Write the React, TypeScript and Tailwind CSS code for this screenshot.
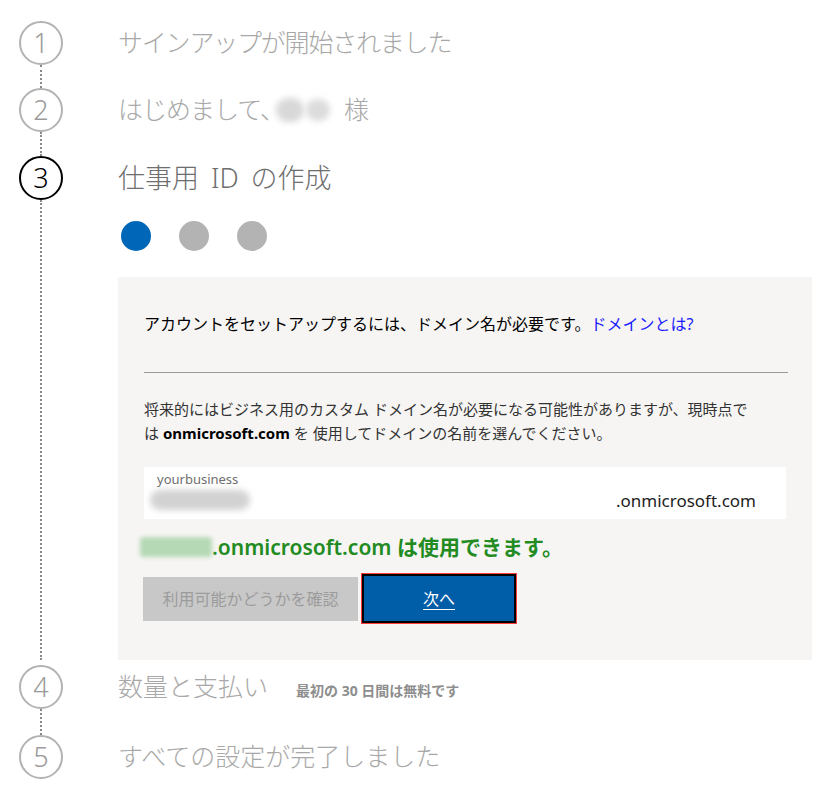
import React from "react"

const font = { fontFamily: '"Noto Sans", "Noto Sans CJK JP", sans-serif' }

function Circle({ n, active }: { n: number; active?: boolean }) {
  return (
    <div
      className={`flex h-[44px] w-[44px] shrink-0 items-center justify-center rounded-full border-2 bg-white text-[27px] font-light leading-none ${
        active ? "border-black text-black" : "border-[#b3b3b3] text-[#9a9a9a]"
      }`}
    >
      <span className="-mt-[2px]">{n}</span>
    </div>
  )
}

function Step({
  n,
  active,
  last,
  children,
  rowClass,
}: {
  n: number
  active?: boolean
  last?: boolean
  children: React.ReactNode
  rowClass?: string
}) {
  return (
    <div className={`flex ${rowClass ?? ""}`}>
      <div className="flex w-[82px] shrink-0 flex-col items-center">
        <Circle n={n} active={active} />
        {!last && <div className="w-0 flex-1 border-l-2 border-dotted border-[#8a8a8a]"></div>}
      </div>
      <div className="ml-[36px] flex-1">{children}</div>
    </div>
  )
}

export default function App() {
  return (
    <div className="min-h-[800px] w-[830px] bg-white pt-[21px]" style={font}>
      {/* Step 1 */}
      <Step n={1} rowClass="h-[67px]">
        <div className="flex h-[44px] items-center text-[25px] font-light tracking-[-1.2px] text-[#a8a8a8]">
          サインアップが開始されました
        </div>
      </Step>

      {/* Step 2 */}
      <Step n={2} rowClass="h-[68px]">
        <div className="flex h-[44px] items-center text-[25px] font-light text-[#a8a8a8]">
          <span className="tracking-[-1px]">はじめまして、</span>
          <span className="-ml-[8px] flex items-center gap-[2px]">
            <span className="h-[24px] w-[28px] rounded-full bg-[#d8d8d8] blur-[3px]"></span>
            <span className="h-[22px] w-[24px] rounded-full bg-[#dcdcdc] blur-[3px]"></span>
          </span>
          <span className="ml-[14px]">様</span>
        </div>
      </Step>

      {/* Step 3 */}
      <Step n={3} active rowClass="pb-[5px]">
        <div className="flex h-[44px] items-center gap-[12px] text-[27px] font-light text-[#6e6e6e]">
          <span>仕事用</span>
          <span>ID</span>
          <span>の作成</span>
        </div>

        <div className="ml-[3px] mt-[21px] flex gap-[28px]">
          <span className="h-[30px] w-[30px] rounded-full bg-[#0067b8]"></span>
          <span className="h-[30px] w-[30px] rounded-full bg-[#b3b3b3]"></span>
          <span className="h-[30px] w-[30px] rounded-full bg-[#b3b3b3]"></span>
        </div>

        <div className="mr-[18px] mt-[26px] bg-[#f6f5f3] pb-[36px] pl-[26px] pr-[24px] pt-[35px]">
          <p className="text-[16px] leading-[24px] text-black">
            アカウントをセットアップするには、ドメイン名が必要です。
            <a href="#" className="text-[#1a1aff]">ドメインとは?</a>
          </p>

          <hr className="mt-[36px] border-t border-[#9a9a9a]" />

          <p className="mt-[24px] text-[15px] leading-[24px] text-[#333]">
            将来的にはビジネス用のカスタム ドメイン名が必要になる可能性がありますが、現時点で
            <br />
            は <span className="font-bold text-black">onmicrosoft.com</span> を 使用してドメインの名前を選んでください。
          </p>

          <div className="relative mt-[22px] mr-[2px] h-[52px] bg-white pl-[13px] pr-[30px]">
            <div className="pt-[3px] text-[13px] leading-[18px] text-[#6e6e6e]">yourbusiness</div>
            <div className="absolute left-[6px] top-[23px] h-[20px] w-[100px] rounded-full bg-[#d2d2d2] blur-[3px]"></div>
            <div className="absolute right-[30px] top-[22px] text-[17px] leading-[24px] text-[#222]">
              .onmicrosoft.com
            </div>
          </div>

          <div className="-ml-[4px] mt-[15px] flex items-center text-[21px] font-semibold leading-[26px] text-[#228b22]">
            <span className="h-[20px] w-[72px] rounded-sm bg-[#b5d9b5] blur-[2px]"></span>
            <span>.onmicrosoft.com は使用できます。</span>
          </div>

          <div className="-ml-[1px] mt-[13px] flex items-center gap-[3px]">
            <button className="h-[44px] w-[215px] bg-[#c8c8c8] text-[16px] text-[#9c9c9c]">
              利用可能かどうかを確認
            </button>
            <span className="border border-[#ff3b3b]">
              <button className="h-[49px] w-[154px] border-2 border-black bg-[#005da8] text-[16px] text-white underline underline-offset-4">
                次へ
              </button>
            </span>
          </div>
        </div>
      </Step>

      {/* Step 4 */}
      <Step n={4} rowClass="h-[70px]">
        <div className="flex h-[44px] items-center text-[#a8a8a8]">
          <span className="text-[25px] font-light">数量と支払い</span>
          <span className="ml-[28px] mt-[6px] text-[14px] font-bold text-[#8e8e8e]">最初の 30 日間は無料です</span>
        </div>
      </Step>

      {/* Step 5 */}
      <Step n={5} last>
        <div className="flex h-[44px] items-center text-[25px] font-light text-[#a8a8a8]">
          すべての設定が完了しました
        </div>
      </Step>
    </div>
  )
}
